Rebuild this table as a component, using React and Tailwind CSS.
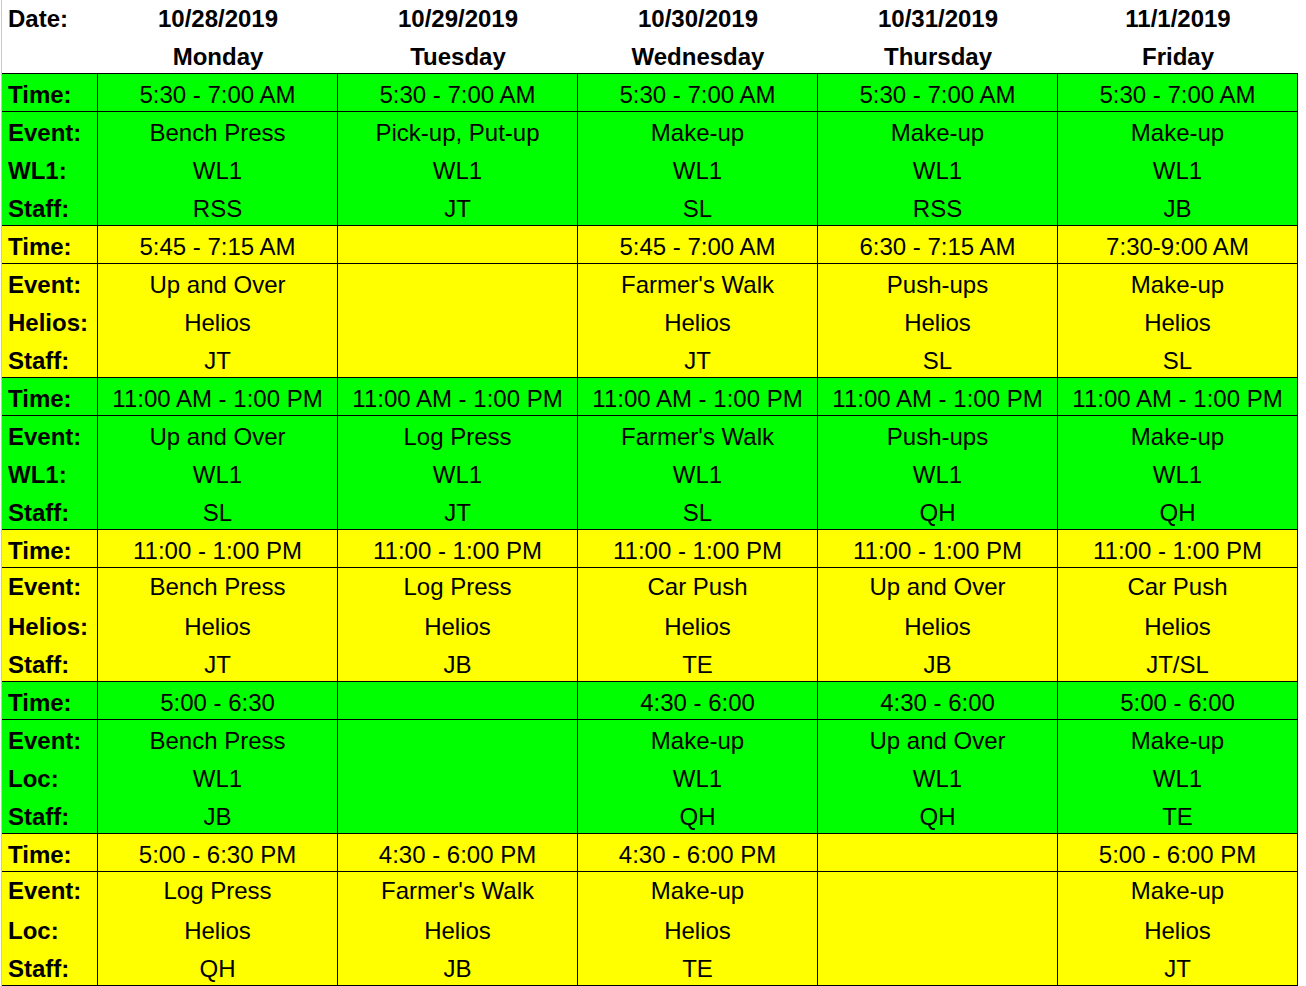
const GREEN = "bg-[#00ff00]";
const YELLOW = "bg-[#ffff00]";

const blocks = [
  {
    bg: GREEN,
    locLabel: "WL1:",
    alt: false,
    time: ["5:30 - 7:00 AM", "5:30 - 7:00 AM", "5:30 - 7:00 AM", "5:30 - 7:00 AM", "5:30 - 7:00 AM"],
    event: ["Bench Press", "Pick-up, Put-up", "Make-up", "Make-up", "Make-up"],
    loc: ["WL1", "WL1", "WL1", "WL1", "WL1"],
    staff: ["RSS", "JT", "SL", "RSS", "JB"],
  },
  {
    bg: YELLOW,
    locLabel: "Helios:",
    alt: false,
    time: ["5:45 - 7:15 AM", "", "5:45 - 7:00 AM", "6:30 - 7:15 AM", "7:30-9:00 AM"],
    event: ["Up and Over", "", "Farmer's Walk", "Push-ups", "Make-up"],
    loc: ["Helios", "", "Helios", "Helios", "Helios"],
    staff: ["JT", "", "JT", "SL", "SL"],
  },
  {
    bg: GREEN,
    locLabel: "WL1:",
    alt: false,
    time: ["11:00 AM - 1:00 PM", "11:00 AM - 1:00 PM", "11:00 AM - 1:00 PM", "11:00 AM - 1:00 PM", "11:00 AM - 1:00 PM"],
    event: ["Up and Over", "Log Press", "Farmer's Walk", "Push-ups", "Make-up"],
    loc: ["WL1", "WL1", "WL1", "WL1", "WL1"],
    staff: ["SL", "JT", "SL", "QH", "QH"],
  },
  {
    bg: YELLOW,
    locLabel: "Helios:",
    alt: true,
    time: ["11:00 - 1:00 PM", "11:00 - 1:00 PM", "11:00 - 1:00 PM", "11:00 - 1:00 PM", "11:00 - 1:00 PM"],
    event: ["Bench Press", "Log Press", "Car Push", "Up and Over", "Car Push"],
    loc: ["Helios", "Helios", "Helios", "Helios", "Helios"],
    staff: ["JT", "JB", "TE", "JB", "JT/SL"],
  },
  {
    bg: GREEN,
    locLabel: "Loc:",
    alt: false,
    time: ["5:00 - 6:30", "", "4:30 - 6:00", "4:30 - 6:00", "5:00 - 6:00"],
    event: ["Bench Press", "", "Make-up", "Up and Over", "Make-up"],
    loc: ["WL1", "", "WL1", "WL1", "WL1"],
    staff: ["JB", "", "QH", "QH", "TE"],
  },
  {
    bg: YELLOW,
    locLabel: "Loc:",
    alt: true,
    time: ["5:00 - 6:30 PM", "4:30 - 6:00 PM", "4:30 - 6:00 PM", "", "5:00 - 6:00 PM"],
    event: ["Log Press", "Farmer's Walk", "Make-up", "", "Make-up"],
    loc: ["Helios", "Helios", "Helios", "", "Helios"],
    staff: ["QH", "JB", "TE", "", "JT"],
  },
];

function Row({ label, values, rowCls, textCls }) {
  return (
    <div className={`grid grid-cols-[96px_repeat(5,240px)] ${rowCls}`}>
      <div className={`border-r border-black pl-[6px] font-bold whitespace-nowrap ${textCls}`}>{label}</div>
      {values.map((v, i) => (
        <div key={i} className={`border-r border-black text-center whitespace-nowrap ${textCls}`}>
          {v}
        </div>
      ))}
    </div>
  );
}

function Block({ b, last }) {
  return (
    <div className={`${b.bg} border-t border-black ${last ? "border-b" : ""}`}>
      <Row label="Time:" values={b.time} rowCls="h-[38px] border-b border-black" textCls="leading-[37px] pt-[2px]" />
      <Row
        label="Event:"
        values={b.event}
        rowCls={b.alt ? "h-[36px]" : "h-[38px]"}
        textCls={b.alt ? "leading-[36px] pt-[1px]" : "leading-[36px] pt-[3px]"}
      />
      <Row
        label={b.locLabel}
        values={b.loc}
        rowCls={b.alt ? "h-[40px]" : "h-[38px]"}
        textCls={b.alt ? "leading-[38px] pt-[4px]" : "leading-[36px] pt-[3px]"}
      />
      <Row label="Staff:" values={b.staff} rowCls="h-[37px]" textCls="leading-[36px] pt-[3px]" />
    </div>
  );
}

export default function App() {
  const dates = ["10/28/2019", "10/29/2019", "10/30/2019", "10/31/2019", "11/1/2019"];
  const days = ["Monday", "Tuesday", "Wednesday", "Thursday", "Friday"];
  return (
    <div
      className="w-[1306px] h-[986px] bg-white text-black text-[24px] overflow-hidden"
      style={{ fontFamily: '"Liberation Sans", Arial, sans-serif' }}
    >
      <div className="ml-px w-[1297px] border-l border-[#c8c8c8]">
        <div className="grid grid-cols-[96px_repeat(5,240px)] h-[37px] font-bold">
          <div className="pl-[6px] leading-[36px] pt-[1px]">Date:</div>
          {dates.map((d) => (
            <div key={d} className="text-center leading-[36px] pt-[1px]">
              {d}
            </div>
          ))}
        </div>
        <div className="grid grid-cols-[96px_repeat(5,240px)] h-[36px] font-bold">
          <div className="pl-[6px] leading-[34px] pt-[3px]"></div>
          {days.map((d) => (
            <div key={d} className="text-center leading-[34px] pt-[3px]">
              {d}
            </div>
          ))}
        </div>
        {blocks.map((b, i) => (
          <Block key={i} b={b} last={i === blocks.length - 1} />
        ))}
      </div>
    </div>
  );
}
